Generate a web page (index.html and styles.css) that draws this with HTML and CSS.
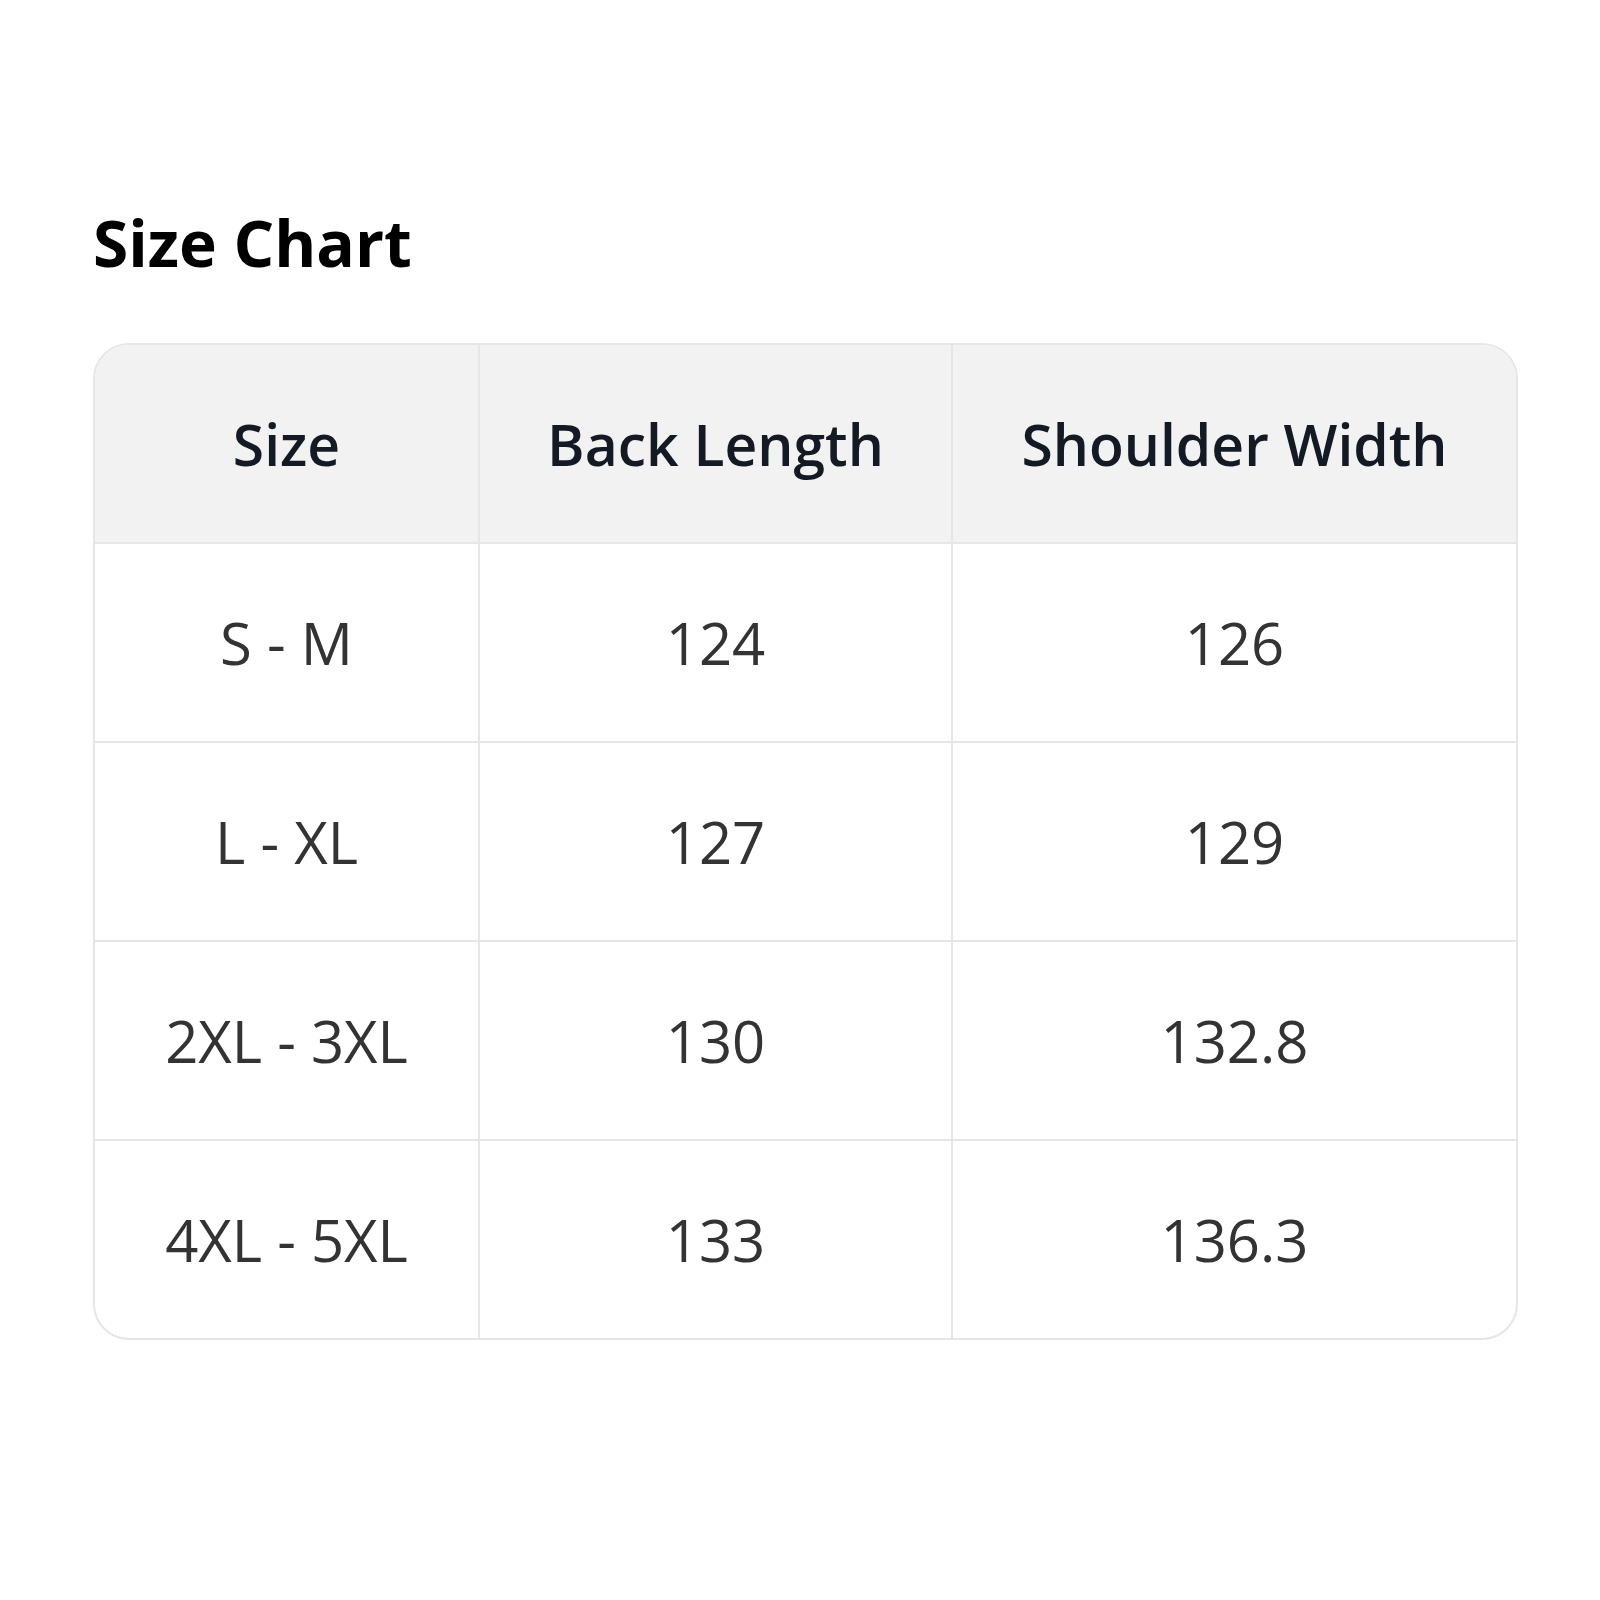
FILE: index.html
```html
<!DOCTYPE html>
<html lang="en">
<head>
<meta charset="utf-8">
<title>Size Chart</title>
<link rel="stylesheet" href="styles.css">
</head>
<body>
<main class="page">
  <h1 class="title">Size Chart</h1>
  <div class="chart">
    <table class="size-table">
      <colgroup>
        <col class="col-size">
        <col class="col-back">
        <col class="col-shoulder">
      </colgroup>
      <thead>
        <tr><th>Size</th><th>Back Length</th><th>Shoulder Width</th></tr>
      </thead>
      <tbody>
        <tr><td>S - M</td><td>124</td><td>126</td></tr>
        <tr><td>L - XL</td><td>127</td><td>129</td></tr>
        <tr><td>2XL - 3XL</td><td>130</td><td>132.8</td></tr>
        <tr><td>4XL - 5XL</td><td>133</td><td>136.3</td></tr>
      </tbody>
    </table>
  </div>
</main>
</body>
</html>
```
FILE: styles.css
```css
html, body {
  margin: 0;
  padding: 0;
  background: #ffffff;
}

.page {
  padding: 207px 82px 0 93px;
  font-family: "Open Sans", "Noto Sans", sans-serif;
}

.title {
  margin: 0 0 64px 0;
  font-size: 64px;
  line-height: 72px;
  font-weight: 700;
  color: #000000;
}

.chart {
  border: 2px solid #e6e6e6;
  border-radius: 36px;
  overflow: hidden;
}

.size-table {
  width: 100%;
  border-collapse: separate;
  border-spacing: 0;
  table-layout: fixed;
}

.col-size { width: 385px; }
.col-back { width: 473px; }
.col-shoulder { width: auto; }

.size-table th,
.size-table td {
  height: 197px;
  padding: 0;
  text-align: center;
  vertical-align: middle;
  border-right: 2px solid #e6e6e6;
  border-bottom: 2px solid #e6e6e6;
}

.size-table th:last-child,
.size-table td:last-child {
  border-right: none;
}

.size-table tbody tr:last-child td {
  border-bottom: none;
}

.size-table th {
  background: #f2f2f2;
  font-size: 57px;
  font-weight: 600;
  color: #141a24;
}

.size-table td {
  font-size: 58px;
  font-weight: 400;
  color: #333333;
}
```
